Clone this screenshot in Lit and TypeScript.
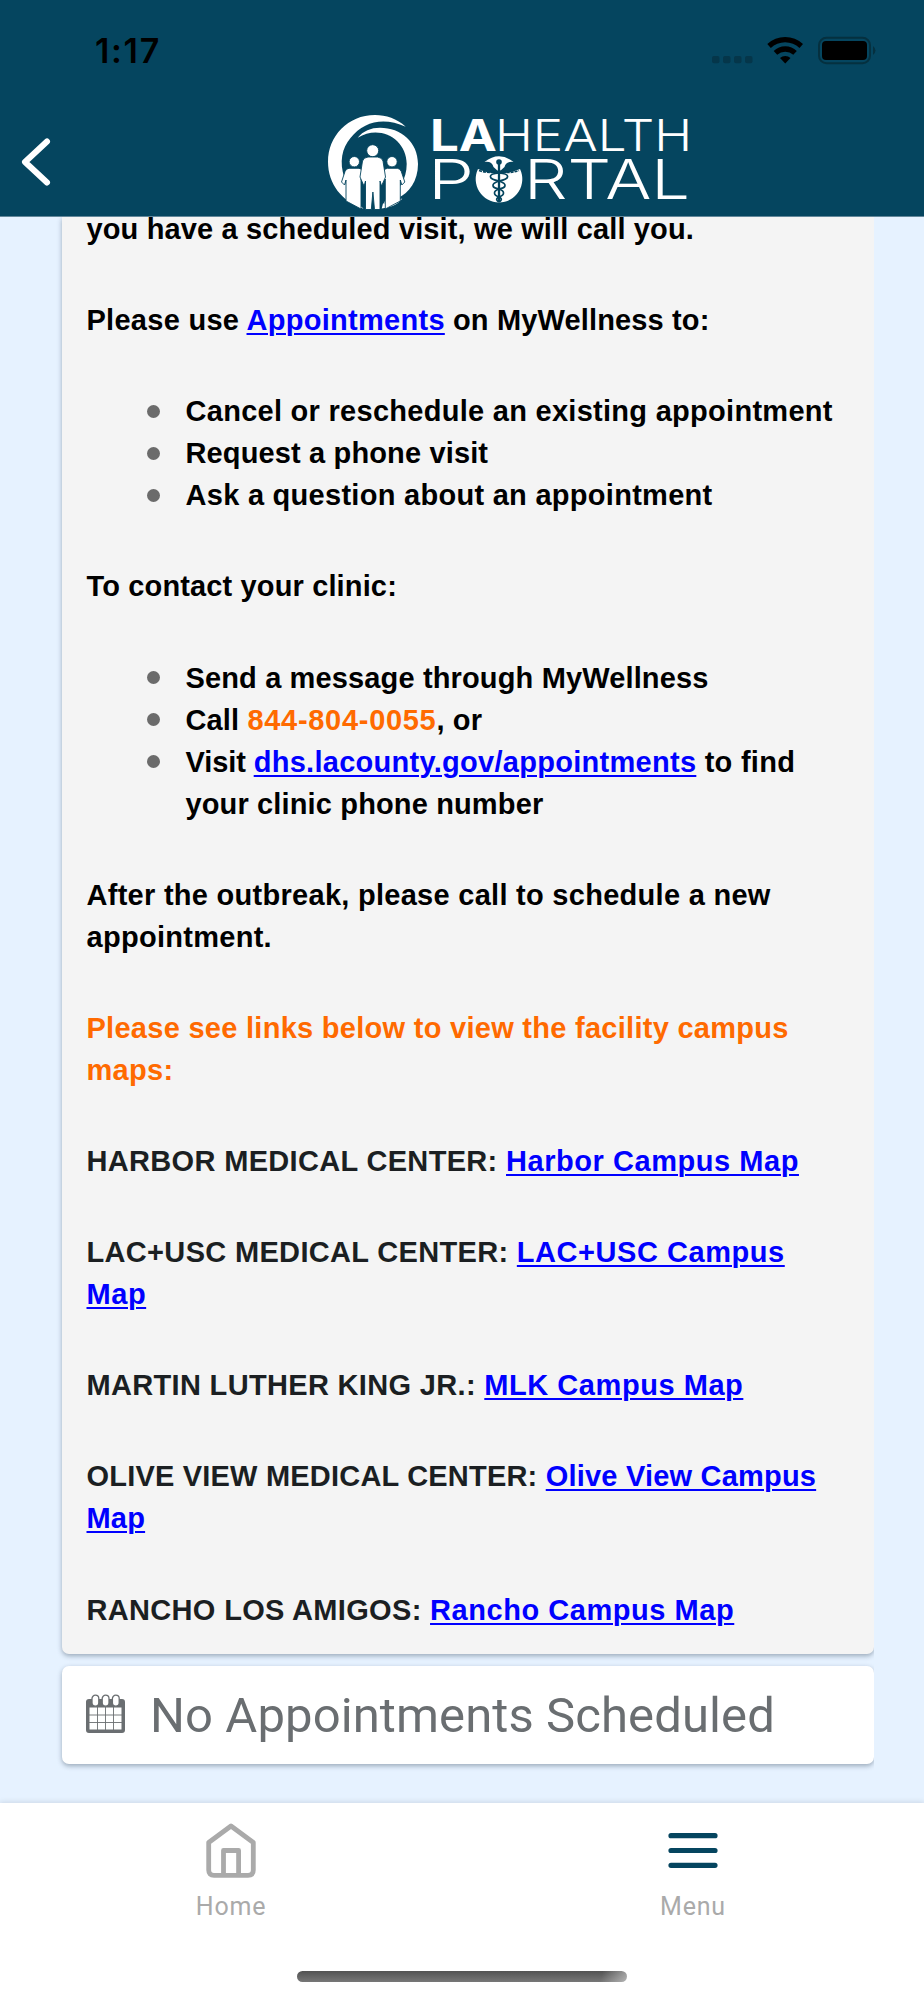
import { LitElement, html, css, svg } from 'lit';
import { customElement } from 'lit/decorators.js';
import { classMap } from 'lit/directives/class-map.js';

interface Campus {
  name: string;
  link: string;
  rest?: string;
  tight?: boolean;
}

const CAMPUSES: Campus[] = [
  { name: 'HARBOR MEDICAL CENTER:', link: 'Harbor Campus Map' },
  { name: 'LAC+USC MEDICAL CENTER:', link: 'LAC+USC Campus', rest: 'Map' },
  { name: 'MARTIN LUTHER KING JR.:', link: 'MLK Campus Map' },
  { name: 'OLIVE VIEW MEDICAL CENTER:', link: 'Olive View Campus', rest: 'Map', tight: true },
  { name: 'RANCHO LOS AMIGOS:', link: 'Rancho Campus Map' },
];

@customElement('status-bar')
export class StatusBar extends LitElement {
  static styles = css`
    :host {
      display: flex;
      justify-content: space-between;
      height: 100px;
      padding: 0 48px 0 95px;
      box-sizing: border-box;
      font-family: Inter, sans-serif;
    }
    .time {
      padding-top: 32px;
      font-size: 34px;
      line-height: 38px;
      font-weight: 600;
      letter-spacing: 1.7px;
      color: #000;
    }
    .icons {
      width: 166px;
      height: 32px;
      padding-top: 34px;
    }
  `;

  render() {
    return html`
      <span class="time">1:17</span>
      <svg class="icons" viewBox="0 0 166 32">
        <g fill="#05364a">
          <rect x="2" y="22" width="7.500" height="7.200" rx="2" />
          <rect x="13" y="22" width="7.500" height="7.200" rx="2" />
          <rect x="24" y="22" width="7.500" height="7.200" rx="2" />
          <rect x="35" y="22" width="7.500" height="7.200" rx="2" />
        </g>
        <path d="M57.300 10 A26 26 0 0 1 93 10 L89.500 14 A20.500 20.500 0 0 0 60.800 14Z" />
        <path d="M63.700 17 A16.400 16.400 0 0 1 86.800 17 L83.300 20.800 A12 12 0 0 0 67.200 20.800Z" />
        <path d="M70 24 A8 8 0 0 1 80.500 24 L75.250 29.400Z" />
        <rect x="109" y="3.800" width="51" height="25.400" rx="7.500" fill="none" stroke="#05303f" stroke-width="2" />
        <rect x="112" y="7" width="45" height="19" rx="4" />
        <path d="M163 12 q5 4.500 0 9Z" fill="#05303f" />
      </svg>
    `;
  }
}

@customElement('portal-logo')
export class PortalLogo extends LitElement {
  static styles = css`
    :host {
      display: block;
      width: 368px;
      height: 102px;
    }
    svg {
      display: block;
      overflow: visible;
    }
    .word {
      fill: #fff;
      font-family: Inter, 'Liberation Sans', sans-serif;
      font-weight: 300;
    }
    .bold {
      font-weight: 700;
    }
  `;

  private _side() {
    return svg`
      <circle cx="28.300" cy="51.700" r="5.200" />
      <path d="M23 58.300 H33 Q36 58.600 37 61.500 L41 71 L38.500 75 L35 69 V99 L20 91 V70 L18.500 75 L15.500 72 L19 61.500 Q20 58.600 23 58.300Z" />
    `;
  }

  render() {
    return html`
      <svg width="368" height="102" viewBox="0 0 368 102" fill="#fff">
        <path d="M79.700 16.700 C71 8.500 60 5 49 5 C22 5 2 26 2 51.700 C2 74 16 91.500 37.500 98.700 L22 84 L18.500 68 C13 52 16 38 24.500 28 C38 11 58 7 79.700 16.700Z" />
        <path d="M31.700 27.700 C37 21 45 17.700 54 17.700 C75 17.700 92 32 92 54 C92 71 83 83 72 88 Q66 91.500 58 93 L60 89 C73 82 80.700 69 80.700 54 C80.700 29 54 14 31.700 27.700Z" />
        <path d="M57 93.500 Q68 92 76.300 88.500 C71 95.500 64 97.500 55.700 98.500Z" />
        <g stroke="#05455f" stroke-width="0.900">
          ${this._side()}
          <g transform="translate(94.300 0) scale(-1 1)">${this._side()}</g>
          <circle cx="46.700" cy="40.700" r="6" />
          <path d="M42 47 H51.500 Q56 47.500 57 51 L59.500 67 L55.500 76 L54 71 V99.500 H48.500 L46.900 82 L45.300 99.500 H39.500 V71 L38 76 L34 67 L36.500 51 Q37.500 47.500 42 47Z" />
        </g>
        <text class="word bold" x="104" y="41" font-size="43.500" textLength="67" lengthAdjust="spacingAndGlyphs">LA</text>
        <text class="word" x="169" y="41" font-size="43.500" textLength="197" lengthAdjust="spacingAndGlyphs">HEALTH</text>
        <text class="word" x="102" y="89" font-size="55" textLength="46" lengthAdjust="spacingAndGlyphs">P</text>
        <text class="word" x="198" y="89" font-size="55" textLength="166" lengthAdjust="spacingAndGlyphs">RTAL</text>
        <path d="M152 59 A23.300 23.300 0 1 0 194 59 Q184 63.500 173 63.500 Q162 63.500 152 59Z" />
        <path d="M158.500 52 Q173 40.500 187.500 52 Q180 51 178.500 57 L173 62 L167.500 57 Q166 51 158.500 52Z" />
        <g fill="none" stroke="#05455f" stroke-width="1.700">
          <path d="M173 52 V92" stroke-width="2.300" />
          <path d="M173 63 C161 64 162 69 173 71 C182 74 180 78 173 79 C167 81 167 85 173 87 C177 89 175 91 173 92" />
          <path d="M173 63 C185 64 184 69 173 71 C164 74 166 78 173 79 C179 81 179 85 173 87 C169 89 171 91 173 92" />
          <path d="M153 60.500 Q163 64 173 61 Q183 64 193 60.500" stroke-dasharray="3 1" />
        </g>
        <circle cx="173" cy="52" r="2.800" fill="#05455f" />
      </svg>
    `;
  }
}

@customElement('notice-card')
export class NoticeCard extends LitElement {
  static styles = css`
    :host {
      display: flow-root;
      box-sizing: border-box;
      padding: 0 24px 0 24.5px;
      background: #f4f4f4;
      border-radius: 0 0 7px 7px;
      box-shadow: 0 2px 5px rgba(40, 60, 80, 0.4);
      font-family: 'Liberation Sans', Arial, sans-serif;
      font-size: 29px;
      font-weight: 700;
      line-height: 42px;
      letter-spacing: 0.28px;
      color: #000;
    }
    p,
    ul {
      margin: 0 0 49.15px;
    }
    p:first-child {
      margin-top: -9px;
    }
    p:last-child {
      margin-bottom: 0;
    }
    ul {
      padding: 0;
      list-style: none;
    }
    li {
      display: flex;
      gap: 26px;
      padding-left: 60px;
    }
    li::before {
      content: '';
      flex: none;
      width: 13px;
      height: 13px;
      margin-top: 14.5px;
      border-radius: 50%;
      background: #6b6b6b;
    }
    a {
      color: #00f;
      text-decoration: underline;
      text-decoration-thickness: 2px;
      text-underline-offset: 3px;
    }
    .snug {
      letter-spacing: 0.14px;
    }
    .visit {
      letter-spacing: -0.1px;
    }
    .orange {
      color: #ff6a00;
    }
    .phone {
      letter-spacing: 0.7px;
    }
    .campus {
      color: #1b1f22;
      letter-spacing: 0.33px;
    }
    .campus a {
      letter-spacing: 0.55px;
    }
    .tight,
    .tight a {
      letter-spacing: 0.2px;
    }
  `;

  render() {
    return html`
      <p class="snug">you have a scheduled visit, we will call you.</p>
      <p>Please use <a>Appointments</a><span class="snug"> on MyWellness to:</span></p>
      <ul>
        <li><span>Cancel or reschedule an existing appointment</span></li>
        <li><span class="snug">Request a phone visit</span></li>
        <li><span>Ask a question about an appointment</span></li>
      </ul>
      <p class="snug">To contact your clinic:</p>
      <ul>
        <li><span class="snug">Send a message through MyWellness</span></li>
        <li><span class="snug">Call <span class="orange phone">844-804-0055</span>, or</span></li>
        <li>
          <span><span class="visit">Visit </span><a>dhs.lacounty.gov/appointments</a> to find<br /><span class="snug">your clinic phone number</span></span>
        </li>
      </ul>
      <p>After the outbreak, please call to schedule a new<br />appointment.</p>
      <p class="orange">Please see links below to view the facility campus<br />maps:</p>
      ${CAMPUSES.map(
        (c) => html`<p class=${classMap({ campus: true, tight: !!c.tight })}>${c.name} <a>${c.link}${c.rest ? html`<br />${c.rest}` : ''}</a></p>`,
      )}
    `;
  }
}

@customElement('tab-bar')
export class TabBar extends LitElement {
  static styles = css`
    :host {
      display: flex;
      flex-direction: column;
      align-items: center;
      height: 197px;
      background: #fff;
      box-shadow: 0 -1px 5px rgba(40, 60, 80, 0.14);
      font-family: Roboto, sans-serif;
    }
    .tabs {
      display: flex;
      align-self: stretch;
      height: 168px;
    }
    .tab {
      flex: 1;
      display: flex;
      flex-direction: column;
      align-items: center;
      padding-top: 18px;
      font-size: 25px;
      line-height: 30px;
      letter-spacing: 0.8px;
      color: #aaa;
    }
    svg {
      width: 60px;
      height: 60px;
      margin-bottom: 11px;
    }
    .indicator {
      width: 330px;
      height: 11px;
      border-radius: 6px;
      background: linear-gradient(100deg, transparent 92%, rgba(255, 255, 255, 0.45)),
        linear-gradient(#525252, #777);
    }
  `;

  render() {
    return html`
      <div class="tabs">
        <div class="tab">
          <svg viewBox="0 0 60 60" fill="none" stroke="#aaa" stroke-width="4.800" stroke-linejoin="round">
            <path d="M7.700 21.500 L30 5 L52.300 21.500 V49 Q52.300 54.300 47 54.300 H13 Q7.700 54.300 7.700 49Z" />
            <path d="M22.500 54 V29.500 H37.600 V54" />
          </svg>
          Home
        </div>
        <div class="tab">
          <svg viewBox="0 0 60 60" stroke="#05455f" stroke-width="5.200" stroke-linecap="round">
            <path d="M8 14.700 H52 M8 29.500 H52 M8 44.300 H52" />
          </svg>
          Menu
        </div>
      </div>
      <div class="indicator"></div>
    `;
  }
}

@customElement('app-root')
export class AppRoot extends LitElement {
  static styles = css`
    :host {
      display: flex;
      flex-direction: column;
      height: 2000px;
      overflow: hidden;
      background: #e6f2ff;
    }
    header {
      flex: none;
      height: 216px;
      background: #05455f;
      border-bottom: 1px solid #62879a;
      position: relative;
      z-index: 1;
    }
    .bar {
      display: flex;
      align-items: flex-start;
      height: 116px;
    }
    .back {
      width: 34px;
      height: 52px;
      margin: 36px 272px 0 20px;
    }
    portal-logo {
      margin-top: 10px;
    }
    main {
      flex: 1;
      overflow: hidden;
      margin-right: 50px;
      padding-left: 62px;
    }
    notice-card {
      height: 1437px;
    }
    .empty {
      display: flex;
      align-items: center;
      box-sizing: border-box;
      height: 98px;
      margin-top: 12px;
      padding-left: 23px;
      border-radius: 7px;
      background: #fff;
      box-shadow: 0 2px 5px rgba(40, 60, 80, 0.4);
      font-family: Roboto, sans-serif;
      font-size: 49px;
      letter-spacing: 0.1px;
      color: #6a6e71;
    }
    .calendar {
      width: 41px;
      height: 40px;
      margin: 0 24px 2px 0;
    }
    tab-bar {
      flex: none;
    }
  `;

  render() {
    return html`
      <header>
        <status-bar></status-bar>
        <div class="bar">
          <svg class="back" viewBox="0 0 34 52" fill="none" stroke="#fff" stroke-width="6" stroke-linecap="round" stroke-linejoin="round">
            <path d="M27 5.500 L5 26 L27 46.500" />
          </svg>
          <portal-logo></portal-logo>
        </div>
      </header>
      <main>
        <notice-card></notice-card>
        <div class="empty">
          <svg class="calendar" viewBox="0 0 41 40" fill="#6a6e71">
            <path fill-rule="evenodd" d="M4 5 H37 Q40 5 40 8 V36 Q40 39 37 39 H4 Q1 39 1 36 V8 Q1 5 4 5Z M4.500 13.500 V35.500 H36.500 V13.500Z" />
            <path d="M12.500 13 V36 M20.500 13 V36 M28.500 13 V36 M4 21 H37 M4 28.500 H37" stroke="#6a6e71" stroke-width="0.900" />
            <g fill="#fff" stroke="#6a6e71" stroke-width="1.300">
              <rect x="7" y="1.200" width="6.800" height="11" rx="3.400" />
              <rect x="17.200" y="1.200" width="6.800" height="11" rx="3.400" />
              <rect x="27.400" y="1.200" width="6.800" height="11" rx="3.400" />
            </g>
          </svg>
          <span>No Appointments Scheduled</span>
        </div>
      </main>
      <tab-bar></tab-bar>
    `;
  }
}
